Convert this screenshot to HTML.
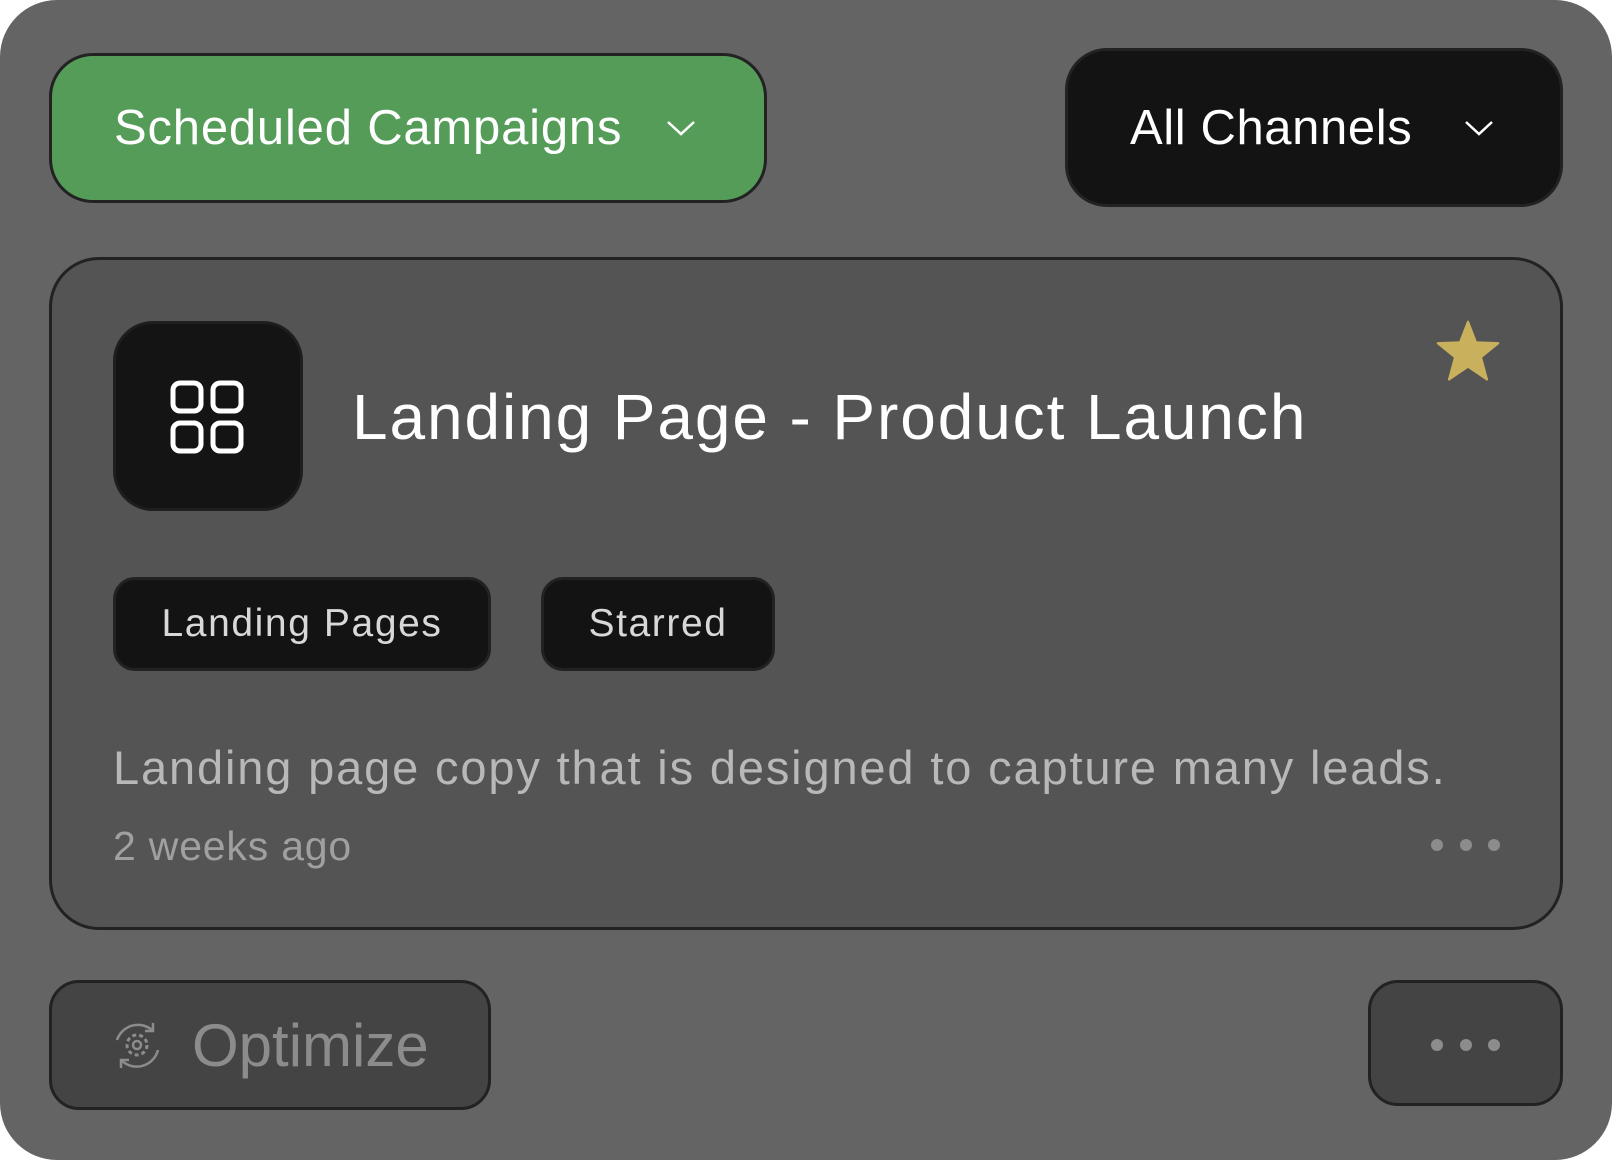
<!DOCTYPE html>
<html><head><meta charset="utf-8"><style>
*{box-sizing:border-box;margin:0;padding:0}
html,body{width:1612px;height:1160px;background:#fff;overflow:hidden}
body{font-family:"Liberation Sans",sans-serif;position:relative}
.wrap{position:absolute;left:0;top:0;width:1612px;height:1160px;background:#646464;border-radius:57px}
.abs{position:absolute}
.btn{border:3px solid #222;display:flex;align-items:center}
.green{left:49px;top:53px;width:718px;height:150px;background:#559c59;border-radius:44px;color:#fff;font-size:49px;padding-left:62px;letter-spacing:0.8px}
.chan{left:1065px;top:48px;width:498px;height:159px;background:#131313;border-radius:42px;color:#fff;font-size:49px;padding-left:62px;letter-spacing:0.6px}
.card{left:49px;top:257px;width:1514px;height:673px;background:#545454;border:3px solid #222;border-radius:50px}
.icon{left:113px;top:321px;width:190px;height:190px;background:#141414;border-radius:40px;border:3px solid #1e1e1e}
.title{left:352px;top:380px;font-size:64px;color:#fff;white-space:nowrap;letter-spacing:1.9px}
.tag{top:577px;height:94px;background:#131313;border:3px solid #222;border-radius:22px;color:#d8d8d8;font-size:39px;justify-content:center;letter-spacing:1.6px}
.desc{left:113px;top:740px;font-size:47px;color:#b8b8b8;white-space:nowrap;letter-spacing:1.85px}
.ago{left:113px;top:823px;font-size:41px;color:#a0a0a0;letter-spacing:0.8px}
.dot{width:12px;height:12px;border-radius:50%;background:#8c8c8c}
.opt{left:49px;top:980px;width:442px;height:130px;background:#444;border-radius:30px;color:#8c8c8c;font-size:60px}
.more{left:1368px;top:980px;width:195px;height:126px;background:#444;border-radius:30px}
</style></head><body>
<div class="wrap">
<div class="abs btn green">Scheduled Campaigns<svg style="margin-left:44px" width="30" height="18" viewBox="0 0 30 18"><path d="M2 3 L15 15 L28 3" fill="none" stroke="#fff" stroke-width="2.5"/></svg></div>
<div class="abs btn chan">All Channels<svg style="margin-left:52px" width="30" height="18" viewBox="0 0 30 18"><path d="M2 3 L15 15 L28 3" fill="none" stroke="#fff" stroke-width="2.5"/></svg></div>
<div class="abs card"></div>
<div class="abs icon"><svg class="abs" style="left:53px;top:55px" width="76" height="76" viewBox="0 0 76 76" fill="none" stroke="#fff" stroke-width="5"><rect x="4" y="4" width="28" height="28" rx="7"/><rect x="44" y="4" width="28" height="28" rx="7"/><rect x="4" y="44" width="28" height="28" rx="7"/><rect x="44" y="44" width="28" height="28" rx="7"/></svg></div>
<div class="abs title">Landing Page - Product Launch</div>
<svg class="abs" style="left:1435px;top:320px" width="66" height="64" viewBox="0 0 24 23"><path d="M12 0.5 L14.9 8 L23 8.3 L16.7 13.4 L18.9 21.5 L12 16.8 L5.1 21.5 L7.3 13.4 L1 8.3 L9.1 8 Z" fill="#c9b05c" stroke="#c9b05c" stroke-linejoin="round" stroke-width="0.8"/></svg>
<div class="abs btn tag" style="left:113px;width:378px">Landing Pages</div>
<div class="abs btn tag" style="left:541px;width:234px">Starred</div>
<div class="abs desc">Landing page copy that is designed to capture many leads.</div>
<div class="abs ago">2 weeks ago</div>
<div class="abs dot" style="left:1431px;top:839px"></div><div class="abs dot" style="left:1460px;top:839px"></div><div class="abs dot" style="left:1488px;top:839px"></div>
<div class="abs btn opt"><svg style="margin-left:60px;margin-right:30px" width="50" height="50" viewBox="0 0 50 50" fill="none" stroke="#8c8c8c" stroke-width="2.5"><path d="M40 10 A22 22 0 0 0 5 20"/><path d="M10 41 A22 22 0 0 0 46 30"/><path d="M41 3 L41 11 L33 11"/><path d="M9 48 L9 40 L17 40"/><circle cx="25" cy="25" r="10" stroke-dasharray="4 3" stroke-width="3"/><circle cx="25" cy="25" r="4"/></svg>Optimize</div>
<div class="abs btn more"></div>
<div class="abs dot" style="left:1431px;top:1039px"></div><div class="abs dot" style="left:1460px;top:1039px"></div><div class="abs dot" style="left:1488px;top:1039px"></div>
</div>
</body></html>
